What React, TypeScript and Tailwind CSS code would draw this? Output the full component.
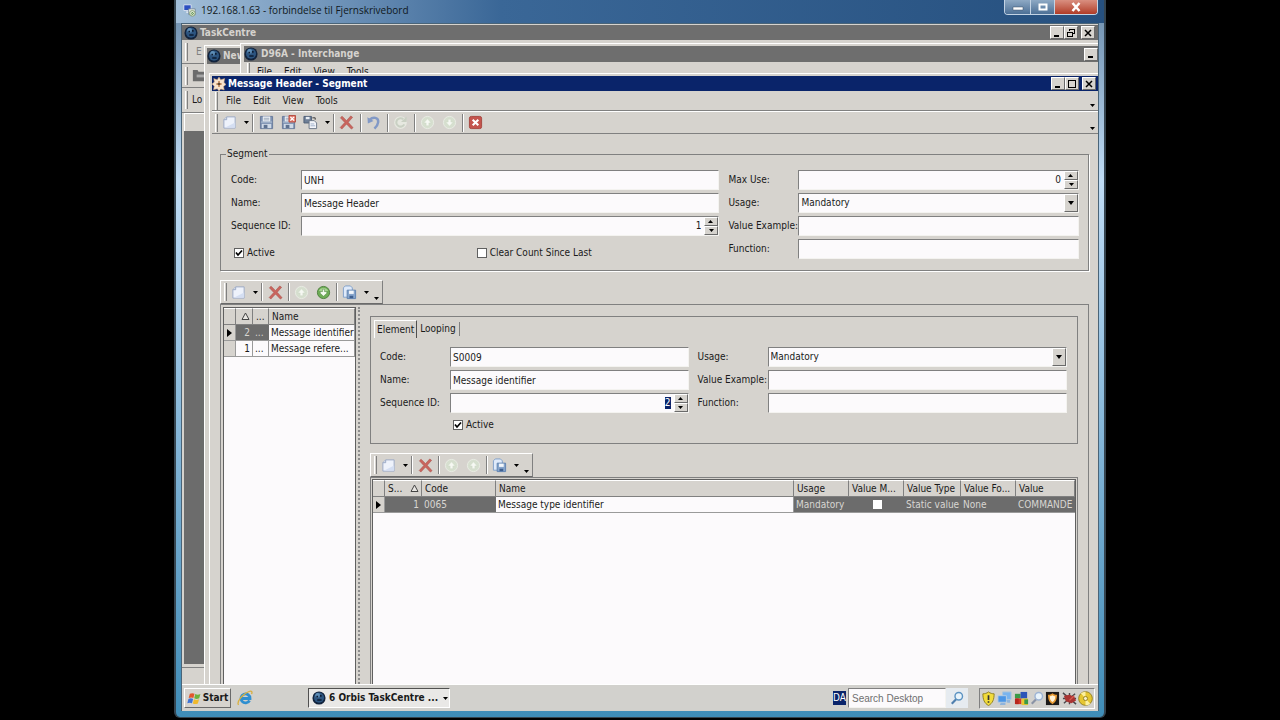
import { useEffect, useRef } from 'react';
import type { ReactNode } from 'react';

const sunken = 'border border-t-[#808080] border-l-[#808080] border-b-[#f4f3f0] border-r-[#f4f3f0] bg-[#fcfafc]';
const raised = 'border border-t-white border-l-white border-b-[#6a6a6a] border-r-[#6a6a6a] bg-[#d6d3ce]';

/* ---------- icons ---------- */

function DocIcon() {
    return (
        <svg viewBox="0 0 16 16" className="size-[15px]">
            <path d="M5 2h9v12H2V5z" fill="#eef2fb" stroke="#9ba9c4" />
            <path d="M5 2v3H2" fill="#cfd8ea" stroke="#9ba9c4" />
            <path d="M3 13.5h11V8z" fill="#d4def2" />
        </svg>
    );
}

function SaveIcon({ mark = false }: { mark?: boolean }) {
    return (
        <svg viewBox="0 0 16 16" className="size-[15px]">
            <path d="M1.5 1.5h13v13h-13z" fill="#7f93b3" stroke="#66799a" />
            <path d="M4 1.500h8V7H4z" fill="#eef2f7" />
            <path d="M2 7.500h12" stroke="#b9c6d8" />
            <path d="M5 3.500h6M5 5.200h6" stroke="#9aa7ba" />
            <path d="M3 9.500h10v4.500H3z" fill="#cfd9e6" />
            <path d="M5 10.500h4V14H5z" fill="#5d7190" />
            {mark && (
                <>
                    <path d="M8.500.5h7v7h-7z" fill="#e0796b" stroke="#b3493d" />
                    <path d="M10 2l4 4M14 2l-4 4" stroke="#fff" strokeWidth="1.500" />
                </>
            )}
        </svg>
    );
}

function CopyIcon() {
    return (
        <svg viewBox="0 0 16 16" className="size-[15px]">
            <path d="M1 1.500h8v7H1z" fill="#6e7f97" stroke="#4d5d75" />
            <path d="M3 2h4v2.500H3z" fill="#e8edf4" />
            <path d="M6.500 6H12l2.500 2.500v6h-8z" fill="#f3f5fa" stroke="#6a7586" />
            <path d="M8 9.500h4M8 11.500h5" stroke="#9fb0cb" />
            <path d="M10 3h3v2" fill="none" stroke="#333" />
        </svg>
    );
}

function CopySaveIcon() {
    return (
        <svg viewBox="0 0 16 16" className="size-[15px]">
            <path d="M3.500 1H9l2 2v10H1.500V3z" fill="#dfeafa" stroke="#7f9fc9" />
            <path d="M5.500 5.500h9v9h-9z" fill="#87a5cc" stroke="#5f82b0" />
            <path d="M7.500 6h5v3.500h-5z" fill="#f2f6fb" />
            <path d="M8 11.500h4V14H8z" fill="#3e5f8f" />
        </svg>
    );
}

function DeleteIcon() {
    return (
        <svg viewBox="0 0 16 16" className="size-[15px]">
            <path d="M1.500 3L3.300 1.300 8 6l4.500-5L14.500 2.500 9.800 7.800 15 13.500l-1.800 1.500L8 9.600 3 15 1.300 13.300 6.200 8z" fill="#c9655e" stroke="#a94c46" strokeWidth=".6" />
        </svg>
    );
}

function UndoIcon() {
    return (
        <svg viewBox="0 0 16 16" className="size-[15px]">
            <path d="M4 5C7.500 1.500 13.500 2.500 13 7.500c-.2 2.500-2 5-4 7" fill="none" stroke="#8299c6" strokeWidth="2.600" />
            <path d="M1.500 2.500l.5 6.500 6-2.500z" fill="#8299c6" />
        </svg>
    );
}

function RedoIcon() {
    return (
        <svg viewBox="0 0 16 16" className="size-[15px]">
            <circle cx="8" cy="8" r="6.800" fill="#e6e8e0" />
            <path d="M12 10A4.500 4.500 0 1 1 11 4.500" fill="none" stroke="#c9d0c3" strokeWidth="2.200" />
            <path d="M8.500 7.500h6v-6z" fill="#c9d0c3" />
        </svg>
    );
}

function ArrowCircle({ dir, active = false }: { dir: 'up' | 'down' | 'plus'; active?: boolean }) {
    const shapes = {
        up: 'M8 4l4 4.500h-2.500v3h-3v-3H4z',
        down: 'M8 12l4-4.500H9.500v-3h-3v3H4z',
        plus: 'M7 4.500h2V7h2.500v1.800L8 12 4.500 8.800V7H7z',
    };
    return (
        <svg viewBox="0 0 16 16" className="size-[15px]">
            <circle cx="8" cy="8" r="6.500" fill={active ? '#6fae57' : '#d6dfcf'} stroke={active ? '#4c7f3c' : '#e9ece4'} />
            {active && <path d="M3 6.500a5.200 4.500 0 0 1 10 0z" fill="#a6d391" />}
            <path d={shapes[dir]} fill={active ? '#f4fbf0' : '#f6f8f3'} stroke={active ? '#4c7f3c' : '#ccd8c4'} strokeWidth=".5" />
        </svg>
    );
}

function CloseBoxIcon() {
    return (
        <svg viewBox="0 0 16 16" className="size-[15px]">
            <rect x="1.500" y="1.500" width="13" height="13" rx="2" fill="#c4544d" stroke="#a5443e" />
            <path d="M5 5l6 6M11 5l-6 6" stroke="#fff" strokeWidth="2.200" />
        </svg>
    );
}

function OrbIcon() {
    return (
        <svg viewBox="0 0 16 16" className="size-[14px] shrink-0">
            <circle cx="8" cy="8" r="7.500" fill="#12233c" />
            <circle cx="8" cy="7.500" r="5.800" fill="#2c547f" />
            <circle cx="6.500" cy="5" r="2.800" fill="#5f8fb8" />
            <path d="M5 5.500h2v2H5zM9 4.500h2v2H9zM6 9.500h5v1.500H6z" fill="#0d1c33" />
        </svg>
    );
}

function StarIcon() {
    return (
        <svg viewBox="0 0 16 16" className="size-[14px] shrink-0">
            <path d="M8 0l2 3.200 4.500-1.400-.8 4.300L16 8.500l-2.800 2.300.8 4-4-1L8 16l-2-2.500-4.300 1 .9-4L0 8l2.700-2.200L2 1.800l4 1.400z" fill="#f7e3cd" stroke="#c69a6d" strokeWidth=".6" />
            <path d="M8 4.500v7M5 8h6" stroke="#b9763f" strokeWidth="1.500" />
            <circle cx="8" cy="8" r="1.500" fill="#5c4632" />
        </svg>
    );
}

function Caret() {
    return (
        <svg viewBox="0 0 5 3" className="h-[3px] w-[5px] shrink-0">
            <path d="M0 0h5L2.500 3z" fill="#000" />
        </svg>
    );
}

function RemoteIcon() {
    return (
        <svg viewBox="0 0 16 16" className="size-[13px] shrink-0">
            <path d="M1 1h9v7H1z" fill="#2b4ec0" stroke="#e8eef6" />
            <path d="M4 9h4v2H4z" fill="#dfe6ee" />
            <path d="M7 6h8v7H7z" fill="#eef3e4" stroke="#6c7f96" />
            <circle cx="11.500" cy="11.500" r="3.500" fill="#dfe9d2" stroke="#7a966b" />
            <path d="M9.500 12l3-2M10.500 13.500l3-2" stroke="#3e7a35" />
        </svg>
    );
}

function FlagIcon() {
    return (
        <svg viewBox="0 0 16 16" className="size-[15px]">
            <path d="M3 3c2-1 3.500-.8 5 0L6.800 7.500c-1.500-.8-3-.8-5 0z" fill="#e3562b" />
            <path d="M8.800 3.300c2 1 3.500.8 5.500 0L13 7.800c-2 .8-3.500.8-5.300 0z" fill="#6fb13a" />
            <path d="M1.500 8.500c2-1 3.500-.8 5 0L5.300 13c-1.500-.8-3-.8-5 0z" fill="#3f74d6" />
            <path d="M7.400 8.800c2 1 3.500.8 5.500 0l-1.300 4.500c-2 .8-3.500.8-5.400 0z" fill="#f0b92c" />
        </svg>
    );
}

function ExplorerIcon() {
    return (
        <svg viewBox="0 0 16 16" className="size-[16px]">
            <path d="M12.500 10.500A4.500 4.500 0 1 1 13 8.500H5" fill="none" stroke="#2f8fd0" strokeWidth="2.800" />
            <path d="M1.500 15C-.5 12 5 4 12 1.500c3-1 3.500.5 2.500 2.500" fill="none" stroke="#d9b040" strokeWidth="1.300" />
        </svg>
    );
}

function SearchIcon({ blue = false }: { blue?: boolean }) {
    return (
        <svg viewBox="0 0 16 16" className="size-[14px]">
            <path d="M7 9.500l-5 5" stroke={blue ? '#4f7fae' : '#8a93a5'} strokeWidth="2.500" />
            <circle cx="10" cy="6" r="4.300" fill="#e9f4fb" stroke={blue ? '#5c93c2' : '#9db4d4'} strokeWidth="1.600" />
        </svg>
    );
}

const shieldPath = 'M8 1c2 1.500 4 2 6 2 0 6-1.500 10-6 12.500C3.500 13 2 9 2 3c2 0 4-.5 6-2z';

/* ---------- controls ---------- */

function Caption({ kind }: { kind: 'min' | 'max' | 'restore' | 'close' }) {
    const label = { min: 'Minimize', max: 'Maximize', restore: 'Restore', close: 'Close' }[kind];
    return (
        <button type="button" aria-label={label} className={`flex h-[13px] w-[14px] items-center justify-center ${raised}`}>
            <svg viewBox="0 0 10 10" className="size-[10px]" fill="none" stroke="#000" shapeRendering="crispEdges">
                {kind === 'min' && <path d="M2 8h5" strokeWidth="2" />}
                {kind === 'max' && <path d="M1 1.500h8M1.500 2v6.500h7V2" />}
                {kind === 'restore' && <path d="M3.500 3V1.500h5v4H7M1.500 4.500h5v4h-5zM3 1.500h6M1 4.500h6" />}
                {kind === 'close' && <path d="M2 2l6 6M8 2L2 8" strokeWidth="1.500" shapeRendering="auto" />}
            </svg>
        </button>
    );
}

function Grip() {
    return <span className="ml-[3px] h-[18px] w-[3px] border-l border-l-white border-r border-r-[#808080]" />;
}

function Sep() {
    return <span className="h-[18px] w-[2px] border-l border-l-[#808080] bg-white" />;
}

function Tool({ label, children }: { label: string; children: ReactNode }) {
    return (
        <button type="button" aria-label={label} className="flex h-[20px] w-[22px] items-center justify-center">
            {children}
        </button>
    );
}

function DropTool() {
    return (
        <button type="button" aria-label="More" className="flex h-[20px] w-[12px] items-center justify-center">
            <Caret />
        </button>
    );
}

function ListToolbar({ firstLit }: { firstLit: boolean }) {
    return (
        <div className={`flex h-[24px] w-[163px] items-center border-r-[#808080] ${raised}`}>
            <Grip />
            <Tool label="New"><DocIcon /></Tool>
            <DropTool />
            <Sep />
            <span className="w-px" />
            <Tool label="Delete"><DeleteIcon /></Tool>
            <span className="w-[2px]" />
            <Sep />
            <Tool label="Move up"><ArrowCircle dir="up" /></Tool>
            <Tool label="Move down">{firstLit ? <ArrowCircle dir="plus" active /> : <ArrowCircle dir="up" />}</Tool>
            <span className="w-[2px]" />
            <Sep />
            <Tool label="Copy"><CopySaveIcon /></Tool>
            <DropTool />
            <button type="button" aria-label="Toolbar options" className="flex h-full w-[8px] items-end justify-center pb-[3px]">
                <Caret />
            </button>
        </div>
    );
}

function FieldLabel({ id, children }: { id: string; children: ReactNode }) {
    return <label htmlFor={id} className="w-[70px] shrink-0 whitespace-nowrap">{children}</label>;
}

function TextField({ id, label, value = '' }: { id: string; label: string; value?: string }) {
    return (
        <div className="flex h-[20px] items-center">
            <FieldLabel id={id}>{label}</FieldLabel>
            <input id={id} type="text" defaultValue={value} className={`h-full min-w-0 flex-1 px-[2px] outline-none ${sunken}`} />
        </div>
    );
}

function SpinField({ id, label, value, selected = false }: { id: string; label: string; value: string; selected?: boolean }) {
    const ref = useRef<HTMLInputElement>(null);

    useEffect(() => {
        if (selected) ref.current?.select();
    }, [selected]);

    return (
        <div className="flex h-[20px] items-center">
            <FieldLabel id={id}>{label}</FieldLabel>
            <div className={`flex h-full min-w-0 flex-1 ${sunken}`}>
                <input
                    ref={ref}
                    id={id}
                    type="text"
                    inputMode="numeric"
                    defaultValue={value}
                    className="min-w-0 flex-1 bg-transparent pr-[3px] text-right outline-none selection:bg-[#0a246a] selection:text-white"
                />
                <div className="flex w-[14px] flex-col">
                    <button type="button" aria-label={`Increase ${label}`} className="flex flex-1 rotate-180 items-center justify-center border border-t-[#6a6a6a] border-r-white border-b-white border-l-[#6a6a6a] bg-[#d6d3ce]">
                        <Caret />
                    </button>
                    <button type="button" aria-label={`Decrease ${label}`} className={`flex flex-1 items-center justify-center ${raised}`}>
                        <Caret />
                    </button>
                </div>
            </div>
        </div>
    );
}

function SelectField({ id, label }: { id: string; label: string }) {
    return (
        <div className="flex h-[20px] items-center">
            <FieldLabel id={id}>{label}</FieldLabel>
            <div className={`grid h-full min-w-0 flex-1 ${sunken}`}>
                <select id={id} className="h-full w-full appearance-none bg-transparent px-[2px] outline-none [grid-area:1/1]">
                    <option>Mandatory</option>
                    <option>Optional</option>
                </select>
                <span className={`pointer-events-none flex w-[14px] items-center justify-center justify-self-end [grid-area:1/1] ${raised}`}>
                    <svg viewBox="0 0 6 4" className="h-[4px] w-[6px]"><path d="M0 0h6L3 4z" /></svg>
                </span>
            </div>
        </div>
    );
}

function CheckField({ label, checked = false }: { label: string; checked?: boolean }) {
    return (
        <label className="flex items-center gap-[3px]">
            <span className="grid">
                <input type="checkbox" defaultChecked={checked} className="peer size-[10px] appearance-none border border-[#606060] bg-white [grid-area:1/1]" />
                <svg viewBox="0 0 10 10" className="pointer-events-none hidden size-[10px] [grid-area:1/1] peer-checked:block">
                    <path d="M2 4.500l2 2.500 4-4.500" fill="none" stroke="#000" strokeWidth="1.700" />
                </svg>
            </span>
            {label}
        </label>
    );
}

function SortMark() {
    return (
        <svg viewBox="0 0 9 9" className="inline size-[9px]">
            <path d="M4.500 1L8 7.500H1z" fill="#e8e6e2" stroke="#444" />
        </svg>
    );
}

function RowMark() {
    return (
        <svg viewBox="0 0 5 8" className="mx-auto h-[8px] w-[5px]">
            <path d="M0 0l5 4-5 4z" />
        </svg>
    );
}

/* ---------- tables ---------- */

const th = 'h-[17px] overflow-hidden border-r border-b border-[#808080] border-t border-t-white bg-[#d6d3ce] pl-[3px] text-left font-normal whitespace-nowrap';
const td = 'h-[16px] overflow-hidden border-r border-b border-[#9a9a9a] pl-[2px] whitespace-nowrap';
const tdDark = 'h-[16px] overflow-hidden border-b border-[#9a9a9a] bg-[#6c6c6c] pl-[2px] text-[#d8d6d2] whitespace-nowrap';

function ElementList() {
    return (
        <table className="w-full table-fixed border-separate border-spacing-0">
            <colgroup>
                <col className="w-[12px]" />
                <col className="w-[17px]" />
                <col className="w-[16px]" />
                <col />
            </colgroup>
            <thead>
                <tr>
                    <th className={th} />
                    <th className={`${th} pl-[5px]`}><SortMark /></th>
                    <th className={th}>...</th>
                    <th className={th}>Name</th>
                </tr>
            </thead>
            <tbody>
                <tr>
                    <td className={`${td} bg-[#d6d3ce] pr-[2px]`}><RowMark /></td>
                    <td className={`${tdDark} pr-[3px] text-right`}>2</td>
                    <td className={tdDark}>...</td>
                    <td className={td}>Message identifier</td>
                </tr>
                <tr>
                    <td className={`${td} bg-[#d6d3ce]`} />
                    <td className={`${td} pr-[2px] text-right`}>1</td>
                    <td className={td}>...</td>
                    <td className={td}>Message refere...</td>
                </tr>
            </tbody>
        </table>
    );
}

function DetailTable() {
    return (
        <table className="w-full table-fixed border-separate border-spacing-0">
            <colgroup>
                <col className="w-[12px]" />
                <col className="w-[37px]" />
                <col className="w-[74px]" />
                <col />
                <col className="w-[55px]" />
                <col className="w-[55px]" />
                <col className="w-[57px]" />
                <col className="w-[55px]" />
                <col className="w-[59px]" />
            </colgroup>
            <thead>
                <tr>
                    <th className={th} />
                    <th className={th}>
                        <span className="flex items-center justify-between pr-[2px]">S... <SortMark /></span>
                    </th>
                    {['Code', 'Name', 'Usage', 'Value M...', 'Value Type', 'Value Fo...', 'Value'].map((name) => (
                        <th key={name} className={th}>{name}</th>
                    ))}
                </tr>
            </thead>
            <tbody>
                <tr>
                    <td className={`${td} bg-[#d6d3ce] pr-[2px]`}><RowMark /></td>
                    <td className={`${tdDark} pr-[3px] text-right`}>1</td>
                    <td className={tdDark}>0065</td>
                    <td className={td}>Message type identifier</td>
                    <td className={tdDark}>Mandatory</td>
                    <td className={tdDark}>
                        <input type="checkbox" aria-label="Value mandatory" className="mx-auto block size-[9px] appearance-none bg-white" />
                    </td>
                    <td className={tdDark}>Static value</td>
                    <td className={tdDark}>None</td>
                    <td className={tdDark}>COMMANDE</td>
                </tr>
            </tbody>
        </table>
    );
}

/* ---------- windows ---------- */

function SegmentWindow() {
    return (
        <div className="absolute top-[49px] right-0 bottom-0 left-[27px] flex flex-col border-t border-l border-white bg-[#d6d3ce] pt-[2px] pl-[2px]">
            <div className="flex h-[15px] items-center bg-[#0a246a] pr-[2px] font-bold text-white">
                <StarIcon />
                <h1 className="flex-1 pl-[2px]">Message Header - Segment</h1>
                <Caption kind="min" />
                <Caption kind="max" />
                <span className="w-[3px]" />
                <Caption kind="close" />
            </div>

            <nav className="flex h-[20px] items-center border-b border-[#808080]">
                <Grip />
                <div className="flex pl-[2px]">
                    {['File', 'Edit', 'View', 'Tools'].map((item) => (
                        <button key={item} type="button" className="px-[6px]">{item}</button>
                    ))}
                </div>
                <span className="flex-1" />
                <span className="self-end p-[3px]"><Caret /></span>
            </nav>

            <div className="flex h-[23px] items-center border-t border-b border-t-white border-b-[#808080]">
                <Grip />
                <Tool label="New"><DocIcon /></Tool>
                <DropTool />
                <Sep />
                <span className="w-px" />
                <Tool label="Save"><SaveIcon /></Tool>
                <Tool label="Save and close"><SaveIcon mark /></Tool>
                <Tool label="Copy"><CopyIcon /></Tool>
                <DropTool />
                <Sep />
                <Tool label="Delete"><DeleteIcon /></Tool>
                <span className="w-[3px]" />
                <Sep />
                <Tool label="Undo"><UndoIcon /></Tool>
                <span className="w-[3px]" />
                <Sep />
                <Tool label="Redo"><RedoIcon /></Tool>
                <span className="w-[3px]" />
                <Sep />
                <Tool label="Previous"><ArrowCircle dir="up" /></Tool>
                <Tool label="Next"><ArrowCircle dir="down" /></Tool>
                <span className="w-[2px]" />
                <Sep />
                <Tool label="Close"><CloseBoxIcon /></Tool>
                <span className="flex-1" />
                <span className="self-end p-[3px]"><Caret /></span>
            </div>

            <div className="flex min-h-0 flex-1 flex-col pt-[14px] pr-[9px] pl-[8px]">
                <fieldset className="border border-[#808080] pr-[9px] pb-[11px] pl-[10px] shadow-[1px_1px_0_#fff]">
                    <legend className="-ml-[5px] h-[12px] px-[1px] leading-[12px]">Segment</legend>
                    <div className="flex gap-[9px] pt-[10px]">
                        <div className="flex flex-[489] flex-col gap-[3px]">
                            <TextField id="seg-code" label="Code:" value="UNH" />
                            <TextField id="seg-name" label="Name:" value="Message Header" />
                            <SpinField id="seg-seq" label="Sequence ID:" value="1" />
                            <div className="grid h-[20px] grid-cols-2 items-end pl-[3px]">
                                <CheckField label="Active" checked />
                                <CheckField label="Clear Count Since Last" />
                            </div>
                        </div>
                        <div className="flex flex-[351] flex-col gap-[3px]">
                            <SpinField id="seg-max" label="Max Use:" value="0" />
                            <SelectField id="seg-usage" label="Usage:" />
                            <TextField id="seg-example" label="Value Example:" />
                            <TextField id="seg-function" label="Function:" />
                        </div>
                    </div>
                </fieldset>

                <div className="pt-[9px]"><ListToolbar firstLit /></div>

                <div className="flex min-h-0 flex-1 border-t border-r border-l border-[#808080] pt-[2px] pr-[10px] pl-[2px]">
                    <div className="w-[133px] shrink-0 border-t border-r border-l border-[#606060] bg-[#fcfafc]">
                        <ElementList />
                    </div>
                    <div className="ml-[2px] w-[2px] shrink-0 border-l-2 border-dotted border-[#8c8c8c]" />

                    <div className="flex min-w-0 flex-1 flex-col pt-[9px] pl-[10px]">
                        <div className="border border-[#808080] pt-[3px] pr-[10px] pb-[12px] pl-[3px]">
                            <div className="flex h-[18px] items-center" role="tablist">
                                <button type="button" role="tab" aria-selected="true" className="h-full border-t border-r border-l border-t-white border-r-[#505050] border-l-white px-[2px]">Element</button>
                                <button type="button" role="tab" aria-selected="false" className="h-[14px] border-r border-[#808080] px-[3px]">Looping</button>
                            </div>
                            <div className="flex gap-[9px] pt-[9px] pl-[6px]">
                                <div className="flex flex-[309] flex-col gap-[3px]">
                                    <TextField id="el-code" label="Code:" value="S0009" />
                                    <TextField id="el-name" label="Name:" value="Message identifier" />
                                    <SpinField id="el-seq" label="Sequence ID:" value="2" selected />
                                    <div className="pt-[3px] pl-[73px]">
                                        <CheckField label="Active" checked />
                                    </div>
                                </div>
                                <div className="flex flex-[370] flex-col gap-[3px]">
                                    <SelectField id="el-usage" label="Usage:" />
                                    <TextField id="el-example" label="Value Example:" />
                                    <TextField id="el-function" label="Function:" />
                                </div>
                            </div>
                        </div>

                        <div className="pt-[9px]"><ListToolbar firstLit={false} /></div>

                        <div className="min-h-0 flex-1 border-t border-r border-l border-[#808080] px-[1px] pt-px">
                            <div className="h-full border-t border-r border-l border-[#606060] bg-[#fcfafc]">
                                <DetailTable />
                            </div>
                        </div>
                    </div>
                </div>
            </div>
        </div>
    );
}

function Desktop() {
    return (
        <main className="relative min-h-0 flex-1 overflow-hidden bg-[#d6d3ce]">
            <div className="flex h-full flex-col pt-px">
                <div className="flex h-[15px] items-center bg-[#6e6e6e] pr-[3px] pl-[2px] font-bold text-[#d6d3ce]">
                    <OrbIcon />
                    <span className="flex-1 pl-[2px]">TaskCentre</span>
                    <Caption kind="min" />
                    <Caption kind="restore" />
                    <span className="w-[3px]" />
                    <Caption kind="close" />
                </div>
                <div className="flex h-[24px] items-center border-b border-[#808080] text-[#808080]"><Grip /><span className="pl-[8px]">E</span></div>
                <div className="flex h-[24px] items-center border-b border-[#808080]">
                    <Grip />
                    <svg viewBox="0 0 16 16" className="ml-[3px] size-[15px]"><path d="M2 2h5l1 2h7v10H2z" fill="#6c6c6c" /><path d="M6 7h9v3H6z" fill="#a8a8a8" /></svg>
                </div>
                <div className="flex h-[25px] items-center border-b border-[#808080]"><Grip /><span className="pl-[4px]">Lo</span></div>
                <div className="mx-[2px] h-[18px] border-t border-l border-white" />
                <div className="mx-[2px] flex-1 bg-[#6c6c6c]" />
                <div className="mt-[3px] h-[17px] border-t border-[#808080]" />
            </div>

            <div className="absolute top-[21px] right-0 bottom-0 left-[22px] border-t border-l border-white bg-[#d6d3ce] pt-[2px] pl-[2px]">
                <div className="flex h-[16px] items-center bg-[#6e6e6e] font-bold text-[#d6d3ce]">
                    <OrbIcon />
                    <span className="pl-[2px]">New</span>
                </div>
            </div>

            <div className="absolute top-[19px] right-0 bottom-0 left-[58px] border-t border-l border-white bg-[#d6d3ce] pt-[2px] pl-[3px]">
                <div className="flex h-[16px] items-center bg-[#6e6e6e] font-bold text-[#d6d3ce]">
                    <OrbIcon />
                    <span className="flex-1 pl-[3px]">D96A - Interchange</span>
                    <Caption kind="min" />
                </div>
                <div className="flex h-[20px] items-center">
                    <Grip />
                    <div className="flex pl-px">
                        {['File', 'Edit', 'View', 'Tools'].map((item) => (
                            <span key={item} className="px-[6px]">{item}</span>
                        ))}
                    </div>
                </div>
            </div>

            <SegmentWindow />
        </main>
    );
}

function Taskbar() {
    return (
        <footer className="flex h-[27px] shrink-0 items-center border-t border-white bg-[#d2d1cd] pr-[3px] pl-[2px]">
            <button type="button" className={`flex h-[20px] w-[47px] items-center justify-center gap-px font-bold ${raised}`}>
                <FlagIcon />Start
            </button>
            <button type="button" aria-label="Internet Explorer" className="ml-[6px]"><ExplorerIcon /></button>
            <button type="button" className="ml-[55px] flex h-[20px] w-[142px] items-center gap-[3px] border border-t-[#505050] border-r-white border-b-white border-l-[#505050] bg-[#e9e8e6] pr-px pl-[3px] font-bold whitespace-nowrap">
                <OrbIcon />
                <span className="flex-1 text-left">6 Orbis TaskCentre ...</span>
                <Caret />
            </button>
            <span className="flex-1" />
            <span className="flex h-[14px] items-center bg-[#0a246a] text-white">DA</span>
            <input type="text" aria-label="Search Desktop" placeholder="Search Desktop" className={`ml-[2px] h-[20px] w-[98px] px-[3px] outline-none [font-family:'Liberation_Sans',sans-serif] placeholder:text-[#6f6f6f] ${sunken}`} />
            <button type="button" aria-label="Search" className="flex h-[20px] w-[22px] items-center justify-center bg-[#e6ebf0]"><SearchIcon blue /></button>
            <div className="ml-[11px] flex h-[21px] w-[116px] items-center justify-between border border-t-[#808080] border-r-white border-b-white border-l-[#808080] px-px">
                <svg viewBox="0 0 16 16" className="size-[15px]"><path d={shieldPath} fill="#f2dc3c" stroke="#8f7f1c" /><path d="M8 4.500v5M8 11v1.500" stroke="#333" strokeWidth="1.800" /></svg>
                <svg viewBox="0 0 16 16" className="size-[15px]">
                    <path d="M6 1h9v8H6z" fill="#79b4ee" stroke="#a9c4de" /><path d="M1 5h9v7H1z" fill="#4b96e6" stroke="#b9cfe4" /><path d="M4 12.500h5v2.500H3zM10 9.500h4v3h-3z" fill="#8fb4dc" />
                </svg>
                <svg viewBox="0 0 16 16" className="size-[15px]">
                    <path d="M1 3h6v5H1z" fill="#3a9a48" /><path d="M7 1h7v7H7z" fill="#2c55b8" /><path d="M2 8h6v6H2z" fill="#d23a28" /><path d="M8 8h7v7H8z" fill="#e9c62f" /><path d="M1 8h4v6H1z" fill="#b8261c" /><path d="M11 9h4v5h-4z" fill="#3a9a48" />
                </svg>
                <SearchIcon />
                <svg viewBox="0 0 16 16" className="size-[15px]"><path d="M1 1h14v14H1z" fill="#1c1a18" /><path d={shieldPath} fill="#e79a33" transform="translate(1.600 1.600) scale(.8)" /><path d="M8 4.500c1.200.8 2 1 3 1 0 3-1 5-3 6.200C6 10.500 5 8.500 5 5.500c1 0 2-.2 3-1z" fill="#fff3d8" /></svg>
                <svg viewBox="0 0 16 16" className="size-[15px]"><path d="M1 2l14 12M2 13L14 3M8 2v12M1 8h14" stroke="#49484c" strokeWidth="1.500" /><path d="M2 5l6-1 5 2 2 4-5 3-6-2z" fill="#a93432" /><path d="M13 5l-5 5" stroke="#d95a50" strokeWidth="1.500" /></svg>
                <svg viewBox="0 0 16 16" className="size-[15px]"><circle cx="8" cy="8" r="7.300" fill="#e5c631" stroke="#94801f" /><path d="M8 8L3 2.500a7 7 0 0 1 5-1.800zM8 8l5 5.500a7 7 0 0 1-5 1.800z" fill="#fbf0a0" /><circle cx="8" cy="8" r="2.200" fill="#f6efc8" stroke="#94801f" /></svg>
            </div>
        </footer>
    );
}

export default function App() {
    return (
        <div className="flex h-screen flex-col bg-black px-[174px] pb-[2px] text-[10px] leading-[12px] text-[#1a1a1a] [font-family:'DejaVu_Sans_Condensed','DejaVu_Sans',sans-serif]">
            <div className="flex min-h-0 flex-1 flex-col rounded-b-[6px] border-x-2 border-b border-[#35444f] bg-linear-to-b from-[#6c8cab] via-[#c0dcf5] via-25% to-[#3f8db8]">
                <header className="flex h-[23px] shrink-0 items-start bg-linear-to-r from-[#a3bfd9] via-[#3a6797] via-35% to-[#26507f] pl-[7px]">
                    <div className="flex flex-1 items-center gap-[5px] pt-[3px]">
                        <RemoteIcon />
                        <span className="leading-[14px] text-[#101820] [font-family:'Open_Sans','Noto_Sans',sans-serif]">192.168.1.63 - forbindelse til Fjernskrivebord</span>
                    </div>
                    <div className="mr-[6px] flex h-[15px] overflow-hidden rounded-b-[4px] border border-t-0 border-[#c3d3e4]">
                        <button type="button" aria-label="Minimize" className="flex w-[26px] items-center justify-center border-r border-[#c3d3e4] bg-linear-to-b from-[#8ea9c4] to-[#4d7096]">
                            <svg viewBox="0 0 12 8" className="h-[8px] w-[12px]"><path d="M1 4h10v3H1z" fill="#fff" stroke="#3b4f66" strokeWidth=".5" /></svg>
                        </button>
                        <button type="button" aria-label="Maximize" className="flex w-[24px] items-center justify-center border-r border-[#c3d3e4] bg-linear-to-b from-[#8ea9c4] to-[#4d7096]">
                            <svg viewBox="0 0 12 10" className="h-[10px] w-[12px]"><path d="M2.500 2.500h7v5h-7z" fill="none" stroke="#fff" strokeWidth="2" /></svg>
                        </button>
                        <button type="button" aria-label="Close" className="flex w-[42px] items-center justify-center bg-linear-to-b from-[#d98f80] to-[#b03a26]">
                            <svg viewBox="0 0 12 10" className="h-[10px] w-[12px]"><path d="M2.500 1l7 8M9.500 1l-7 8" stroke="#fff" strokeWidth="2.500" /></svg>
                        </button>
                    </div>
                </header>
                <div className="mx-[5px] mb-[6px] flex min-h-0 flex-1 flex-col border-x border-t border-[#4a6478]">
                    <Desktop />
                    <Taskbar />
                </div>
            </div>
        </div>
    );
}
